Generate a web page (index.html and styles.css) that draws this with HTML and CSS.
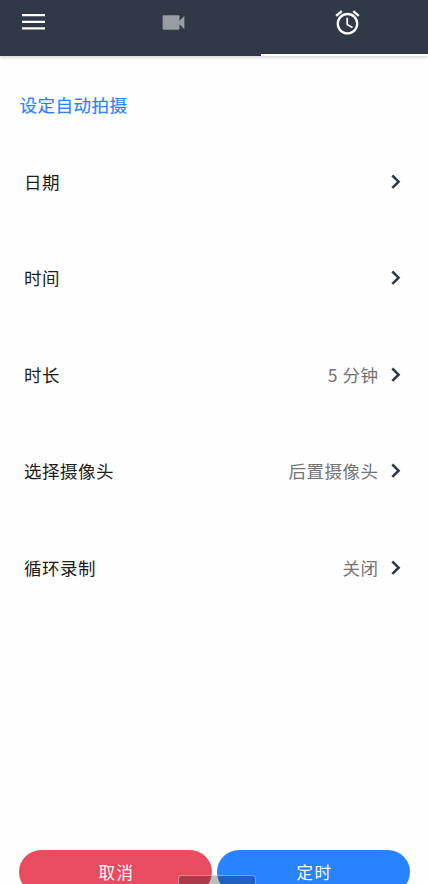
FILE: index.html
```html
<!DOCTYPE html>
<html lang="zh-CN">
<head>
<meta charset="utf-8">
<title>设定自动拍摄</title>
<link rel="stylesheet" href="styles.css">
</head>
<body>
<div class="screen">
  <header class="bar">
    <svg class="menu" viewBox="0 0 23 16"><path d="M0 0h23v2.200H0zM0 6.700h23v2.200H0zM0 13.300h23v2.200H0z"/></svg>
    <div class="tab"><svg class="icon dim" viewBox="0 0 24 24"><path d="M17 10.500V7c0-.55-.45-1-1-1H4c-.55 0-1 .45-1 1v10c0 .55.45 1 1 1h12c.55 0 1-.45 1-1v-3.500l4 4v-11l-4 4z"/></svg></div>
    <div class="tab active"><svg class="icon" viewBox="0 0 24 24"><path d="M22 5.720l-4.600-3.860-1.290 1.530 4.600 3.860L22 5.720zM7.880 3.390L6.600 1.860 2 5.710l1.290 1.530 4.590-3.850zM12.500 8H11v6l4.750 2.850.75-1.230-4-2.370V8zM12 4c-4.970 0-9 4.030-9 9s4.020 9 9 9c4.970 0 9-4.030 9-9s-4.030-9-9-9zm0 16c-3.870 0-7-3.130-7-7s3.130-7 7-7 7 3.130 7 7-3.130 7-7 7z"/></svg></div>
  </header>
  <main>
    <h1>设定自动拍摄</h1>
    <ul class="rows">
      <li><span>日期</span><svg class="chev" viewBox="0 0 10 16"><path d="M1.300 1.500L7.600 7.700l-6.300 6.200"/></svg></li>
      <li><span>时间</span><svg class="chev" viewBox="0 0 10 16"><path d="M1.300 1.500L7.600 7.700l-6.300 6.200"/></svg></li>
      <li><span>时长</span><span class="value">5 分钟</span><svg class="chev" viewBox="0 0 10 16"><path d="M1.300 1.500L7.600 7.700l-6.300 6.200"/></svg></li>
      <li><span>选择摄像头</span><span class="value">后置摄像头</span><svg class="chev" viewBox="0 0 10 16"><path d="M1.300 1.500L7.600 7.700l-6.300 6.200"/></svg></li>
      <li><span>循环录制</span><span class="value">关闭</span><svg class="chev" viewBox="0 0 10 16"><path d="M1.300 1.500L7.600 7.700l-6.300 6.200"/></svg></li>
    </ul>
  </main>
  <footer class="actions">
    <button class="cancel">取消</button>
    <button class="confirm">定时</button>
  </footer>
  <div class="handle"></div>
</div>
</body>
</html>
```
FILE: styles.css
```css
* { box-sizing: border-box; }
body {
  margin: 0;
  background: #fefefe;
  color: #1c1c1c;
  font: 17.500px/26px Roboto, "Noto Sans CJK SC", sans-serif;
  letter-spacing: .5px;
}
.screen {
  position: relative;
  height: 884px;
  overflow: hidden;
  display: flex;
  flex-direction: column;
}
.bar {
  height: 56px;
  flex: none;
  display: flex;
  background: #303948;
  box-shadow: 0 1px 4px rgba(0, 0, 0, .2);
}
.menu {
  width: 23px;
  height: 16px;
  margin: 14.300px 42px 0 22px;
  fill: #fff;
}
.tab {
  width: 173.500px;
  height: 56px;
  padding-top: 7.500px;
}
.tab.active {
  width: 167.500px;
  border-bottom: 2px solid #fff;
}
.icon {
  display: block;
  width: 29px;
  height: 29px;
  margin-left: 72.500px;
  fill: #fff;
}
.icon.dim {
  margin-left: 72px;
  fill: #989ca3;
}
main { flex: 1; }
h1 {
  margin: 37px 0 0 19.500px;
  font: inherit;
  color: #2b83fb;
  -webkit-text-stroke: .2px #2b83fb;
}
.rows {
  list-style: none;
  margin: 14.500px 0 0;
  padding: 0 27px 0 24px;
}
.rows li {
  display: flex;
  align-items: center;
  height: 96.500px;
}
.rows span { padding-top: 2px; }
.rows .value {
  margin-left: auto;
  padding: 0;
  color: #747474;
  font-family: "Noto Sans CJK SC", sans-serif;
}
.chev {
  width: 10px;
  height: 16px;
  margin-left: 12.500px;
  fill: none;
  stroke: #303948;
  stroke-width: 2.500;
}
.rows span:first-child + .chev { margin-left: auto; }
.actions {
  height: 34px;
  display: flex;
  gap: 5px;
  padding: 0 18px 0 19px;
}
.actions button {
  flex: 1;
  height: 44px;
  border: 0;
  border-radius: 22px;
  color: #fff;
  font: 16.500px/44px Roboto, "Noto Sans CJK SC", sans-serif;
  letter-spacing: 1.500px;
  padding: 2px 0 0 2px;
}
.cancel { background: #e94c61; }
.confirm { background: #2982ff; }
.handle {
  position: absolute;
  left: 178px;
  top: 875px;
  width: 78px;
  height: 16px;
  border: 1px solid rgba(255, 255, 255, .4);
  border-radius: 4px;
  background: rgba(0, 0, 0, .25);
}
```
